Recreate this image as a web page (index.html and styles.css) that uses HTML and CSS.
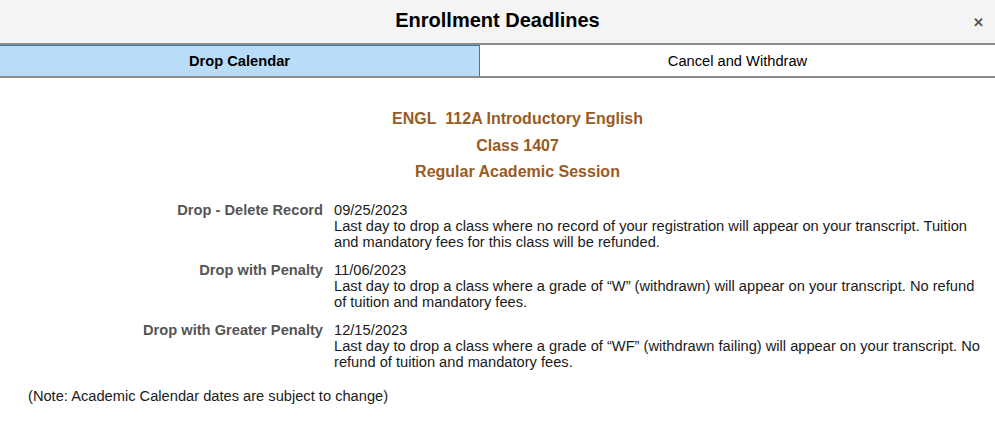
FILE: index.html
```html
<!DOCTYPE html>
<html lang="en">
<head>
  <meta charset="UTF-8">
  <meta name="viewport" content="width=device-width, initial-scale=1.0">
  <title>Enrollment Deadlines</title>
  <link rel="stylesheet" href="styles.css">
</head>
<body>
  <div class="header">
    <h1>Enrollment Deadlines</h1>
    <button class="close-btn" aria-label="Close">&#x2715;</button>
  </div>

  <div class="tabs">
    <div class="tab active">Drop Calendar</div>
    <div class="tab">Cancel and Withdraw</div>
  </div>

  <div class="content">
    <div class="course-info">
      <div>ENGL&nbsp; 112A Introductory English</div>
      <div>Class 1407</div>
      <div>Regular Academic Session</div>
    </div>

    <div class="deadlines">
      <div class="deadline-label">Drop - Delete Record</div>
      <div class="deadline-value">
        <div>09/25/2023</div>
        <div>Last day to drop a class where no record of your registration will appear on your transcript. Tuition and mandatory fees for this class will be refunded.</div>
      </div>

      <div class="deadline-label">Drop with Penalty</div>
      <div class="deadline-value">
        <div>11/06/2023</div>
        <div>Last day to drop a class where a grade of “W” (withdrawn) will appear on your transcript. No refund of tuition and mandatory fees.</div>
      </div>

      <div class="deadline-label">Drop with Greater Penalty</div>
      <div class="deadline-value">
        <div>12/15/2023</div>
        <div>Last day to drop a class where a grade of “WF” (withdrawn failing) will appear on your transcript. No refund of tuition and mandatory fees.</div>
      </div>
    </div>

    <p class="note">(Note: Academic Calendar dates are subject to change)</p>
  </div>
</body>
</html>
```

FILE: styles.css
```css
:root {
  --header-bg: #f4f4f4;
  --tab-active: #b9dcf8;
  --tab-border: #3f76b0;
  --line: #8c8c8c;
  --brown: #9a5b23;
  --label: #555555;
  --text: #1a1a1a;
}

body {
  font-family: "Liberation Sans", Arial, Helvetica, sans-serif;
  margin: 0;
  background: #ffffff;
  color: var(--text);
}

.header {
  height: 43px;
  background: var(--header-bg);
  border-bottom: 2px solid var(--line);
  display: flex;
  align-items: center;
  justify-content: center;
  position: relative;
}

.header h1 {
  margin: 0;
  font-size: 20px;
  font-weight: bold;
  color: #000;
  padding-bottom: 3px;
}

.close-btn {
  position: absolute;
  right: 11px;
  top: 15px;
  border: none;
  background: none;
  padding: 0;
  font-size: 13px;
  font-weight: bold;
  color: #555;
  cursor: pointer;
}

.tabs {
  display: flex;
  border-bottom: 2px solid var(--line);
}

.tab {
  height: 31px;
  display: flex;
  align-items: center;
  justify-content: center;
  font-size: 14.67px;
  color: #000;
  box-sizing: border-box;
}

.tab:first-child {
  width: 480px;
}

.tab:last-child {
  flex: 1;
}

.tab.active {
  background: var(--tab-active);
  font-weight: bold;
  border-right: 1px solid var(--tab-border);
  box-shadow: inset 0 1px 0 var(--tab-border);
}

.content {
  padding: 28px 0 0 0;
}

.course-info {
  text-align: center;
  color: var(--brown);
  font-weight: bold;
  font-size: 16px;
  line-height: 26.5px;
  padding-left: 40px;
}

.deadlines {
  display: grid;
  grid-template-columns: 323px 650px;
  column-gap: 11px;
  row-gap: 12px;
  margin-top: 16px;
  font-size: 14.67px;
  line-height: 16px;
}

.deadline-label {
  text-align: right;
  font-weight: bold;
  color: var(--label);
}

.note {
  margin: 18px 0 0 28px;
  font-size: 14.67px;
  line-height: 16px;
}
```
